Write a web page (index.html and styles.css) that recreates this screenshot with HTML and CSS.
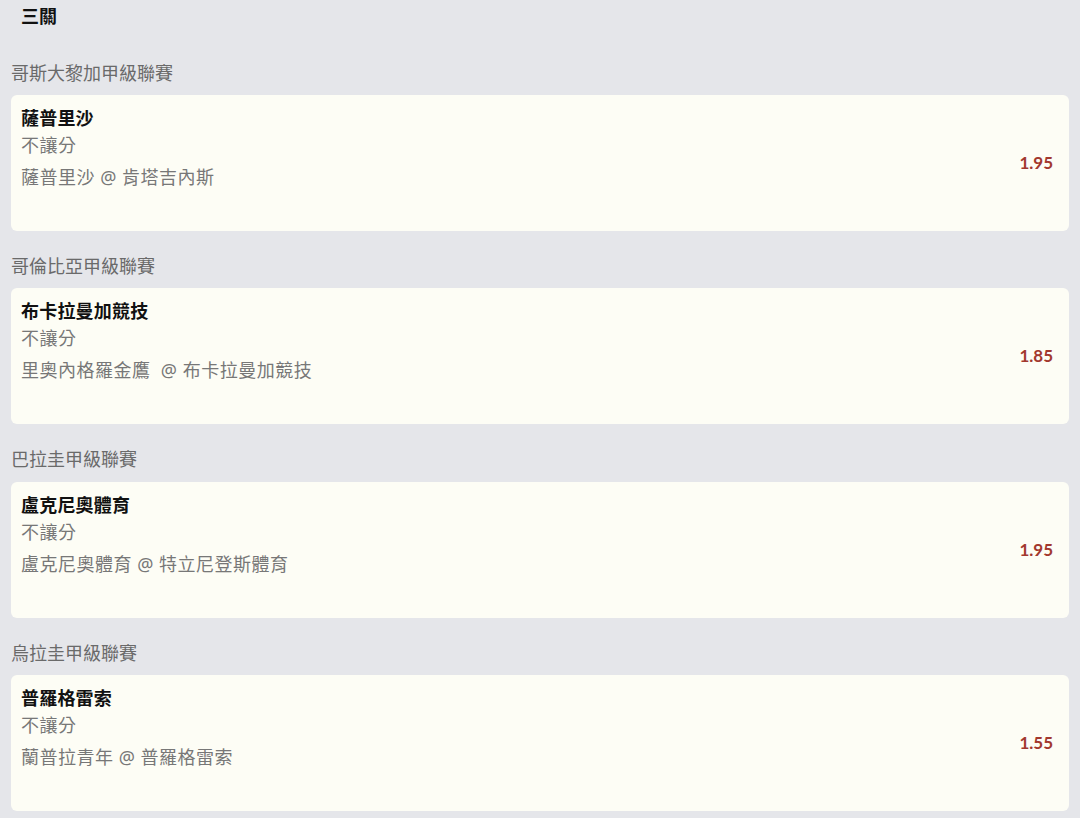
FILE: index.html
```html
<!DOCTYPE html>
<html>
  <head>
    <meta charset="utf-8">
    <title>三關</title>
    <link rel="stylesheet" href="styles.css">
  </head>
  <body>
    <div id="slip">
      <div class="slip-title">三關</div>

      <div class="leg">
        <div class="leg-league">哥斯大黎加甲級聯賽</div>
        <div class="leg-card">
          <div class="leg-info">
            <div class="leg-pick">薩普里沙</div>
            <div class="leg-market">不讓分</div>
            <div class="leg-match">薩普里沙 @ 肯塔吉內斯</div>
          </div>
          <div class="leg-odds">1.95</div>
        </div>
      </div>

      <div class="leg">
        <div class="leg-league">哥倫比亞甲級聯賽</div>
        <div class="leg-card">
          <div class="leg-info">
            <div class="leg-pick">布卡拉曼加競技</div>
            <div class="leg-market">不讓分</div>
            <div class="leg-match">里奧內格羅金鷹&nbsp; @ 布卡拉曼加競技</div>
          </div>
          <div class="leg-odds">1.85</div>
        </div>
      </div>

      <div class="leg">
        <div class="leg-league">巴拉圭甲級聯賽</div>
        <div class="leg-card">
          <div class="leg-info">
            <div class="leg-pick">盧克尼奧體育</div>
            <div class="leg-market">不讓分</div>
            <div class="leg-match">盧克尼奧體育 @ 特立尼登斯體育</div>
          </div>
          <div class="leg-odds">1.95</div>
        </div>
      </div>

      <div class="leg">
        <div class="leg-league">烏拉圭甲級聯賽</div>
        <div class="leg-card">
          <div class="leg-info">
            <div class="leg-pick">普羅格雷索</div>
            <div class="leg-market">不讓分</div>
            <div class="leg-match">蘭普拉青年 @ 普羅格雷索</div>
          </div>
          <div class="leg-odds">1.55</div>
        </div>
      </div>
    </div>
  </body>
</html>
```

FILE: styles.css
```css
html, body {
  margin: 0;
  padding: 0;
  background: #e5e6ea;
}

body {
  font-family: "Noto Sans", "Noto Sans CJK TC", sans-serif;
  font-size: 18px;
  color: #111;
}

#slip {
  padding: 0 11px;
}

.slip-title {
  padding: 0 10px 5.65px;
  line-height: 32px;
  font-weight: bold;
}

.leg-league {
  padding: 23px 0 10.35px;
  line-height: 24px;
  color: #6a6a6a;
}

.leg-card {
  display: flex;
  align-items: center;
  height: 136px;
  box-sizing: border-box;
  padding: 10px 16px 0 10px;
  background: #fdfdf5;
  border-radius: 6px;
}

.leg-info {
  flex: 1 1 auto;
  align-self: flex-start;
}

.leg-pick {
  line-height: 26px;
  font-weight: bold;
  letter-spacing: 0.2px;
}

.leg-market {
  line-height: 28px;
  color: #777;
  letter-spacing: 0.5px;
}

.leg-match {
  margin-top: 4px;
  line-height: 28px;
  color: #777;
  letter-spacing: 0.5px;
}

.leg-odds {
  flex: 0 0 auto;
  margin-top: -11px;
  font-family: Lato, "Noto Sans", sans-serif;
  font-weight: bold;
  font-size: 17px;
  color: #a2382e;
}
```
